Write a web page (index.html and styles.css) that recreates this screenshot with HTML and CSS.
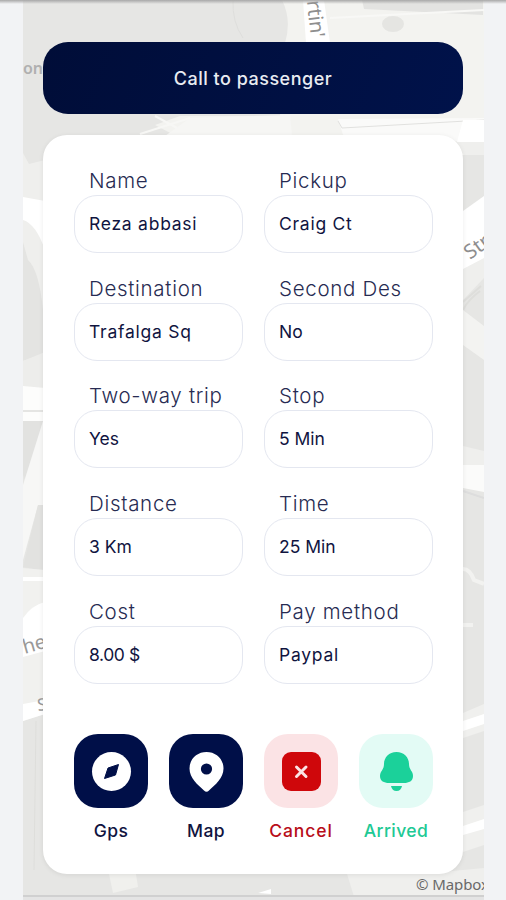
FILE: index.html
```html
<!DOCTYPE html>
<html lang="en">
<head>
<meta charset="utf-8">
<title>Trip details</title>
<link rel="stylesheet" href="styles.css">
</head>
<body>
<svg class="map" viewBox="23 0 461 900" aria-hidden="true">
  <rect x="23" width="461" height="900" fill="#e6e6e4"/>
  <path d="M287 0H484V155H454L420 138H180L155 125L180 116H280L285 43Q292 20 282 0Z" fill="#f3f3f0"/>
  <path d="M233 0Q232 22 243 38" fill="none" stroke="#dededc"/>
  <path d="M303 0H324L330 43H306Z" fill="#fff"/>
  <path d="M362 0H483V15L364 9Z" fill="#e3e3e1"/>
  <ellipse cx="393" cy="24" rx="11" ry="8" fill="#e5e5e2"/>
  <path d="M330 18L484 10" stroke="#f8f8f6" stroke-width="2"/>
  <path d="M190 118L290 115L292 136H165Z" fill="#f6f6f4"/>
  <path d="M338 119L484 118V141H345Z" fill="#fafaf9"/><path d="M338 121L342 128L484 120" fill="none" stroke="#e1e1df"/>
  <path d="M140 134L190 118M155 116L177 128" stroke="#f7f7f5" stroke-width="2"/>
  <path d="M23 153L29 164L45 160V363L23 361Z" fill="#efefed"/>
  <path d="M23 197L45 201V250Q36 224 23 220Z" fill="#fff"/>
  <path d="M23 242L28 260Q39 270 43 310V354L23 361Z" fill="#e4e4e2"/>
  <path d="M23 361L45 352V388H23Z" fill="#ededeb"/>
  <path d="M23 386L45 388V421H23Z" fill="#fdfdfc"/><path d="M23 411H45" stroke="#e5e5e3" stroke-width="2"/>
  <path d="M23 421H43L28 485L23 475Z" fill="#e2e2e0"/>
  <path d="M43 421V505H38L23 560V485Z" fill="#f7f7f6"/>
  <path d="M38 505H45V571L23 567Z" fill="#e2e2e0"/>
  <path d="M23 568L45 570V714L23 721Z" fill="#f1f1ef"/><path d="M23 579H45" stroke="#fff" stroke-width="4"/>
  <path d="M23 618Q32 605 45 602V651L23 657Z" fill="#fff"/>
  <path d="M23 704L45 700V714L23 721Z" fill="#fff"/>
  <path d="M36 721L34 870" stroke="#dededb"/>
  <path d="M463 120H484V142H457Z" fill="#fff"/>
  <path d="M455 142H484V155H464Z" fill="#efefed"/>
  <path d="M463 211L484 196V264L463 271Z" fill="#fff"/>
  <path d="M463 269L484 258V278L463 300Z" fill="#efefed"/>
  <path d="M463 302L481 286M463 310Q468 300 480 291" fill="none" stroke="#dededb" stroke-width="2"/>
  <path d="M463 310L484 326V360L463 345Z" fill="#f3f3f1"/>
  <path d="M463 446L484 451V466H463Z" fill="#efefed"/><path d="M463 465H484V492L463 488Z" fill="#fbfbfa"/>
  <path d="M463 491L484 498" stroke="#ddd" stroke-width="2"/>
  <path d="M463 569Q470 569 474 580L484 584M463 625H473" fill="none" stroke="#f2f2f0" stroke-width="4"/>
  <path d="M463 713L484 704V731L463 738Z" fill="#f0f0ee"/><path d="M463 721L484 714V724L463 731Z" fill="#fff"/>
  <path d="M463 812L484 805V845L463 852Z" fill="#f0f0ee"/><path d="M463 826L484 819V829L463 835Z" fill="#fff"/>
  <path d="M109 874H136L138 887L113 893Z" fill="#f0f0ed"/>
  <path d="M347 874H420L484 868V900H355Z" fill="#efefed"/><path d="M258 893L271 889V894Z" fill="#fff"/>
  <path d="M23 896H484" stroke="#d0d0d0" stroke-width="2"/>
  <rect x="23" y="897" width="461" height="3" fill="#e4e4e4"/>
  <g class="street">
    <text x="23" y="74" font-size="16" font-weight="600" fill="#b0b0b0">on.</text>
    <text transform="translate(307 1) rotate(84)" font-size="20" fill="#8e8e8e">rtin'</text>
    <text transform="translate(470 260) rotate(-36)" font-size="20" fill="#8e8e8e">Str</text>
    <text transform="translate(14 657) rotate(-16)" font-size="20" fill="#999">The</text>
    <text transform="translate(38 711) rotate(-7)" font-size="17" fill="#999">S</text>
    <text x="416" y="890" font-size="15" fill="#696969" textLength="73">© Mapbox</text>
  </g>
</svg>
<div class="top-edge"></div>
<main class="screen">
  <button class="call">Call to passenger</button>
  <section class="card">
    <div class="fields">
      <div class="field"><label>Name</label><div class="value name">Reza abbasi</div></div>
      <div class="field"><label>Pickup</label><div class="value name">Craig Ct</div></div>
      <div class="field"><label>Destination</label><div class="value name">Trafalga Sq</div></div>
      <div class="field"><label>Second Des</label><div class="value">No</div></div>
      <div class="field"><label>Two-way trip</label><div class="value">Yes</div></div>
      <div class="field"><label>Stop</label><div class="value">5 Min</div></div>
      <div class="field"><label>Distance</label><div class="value">3 Km</div></div>
      <div class="field"><label>Time</label><div class="value">25 Min</div></div>
      <div class="field"><label>Cost</label><div class="value price">8.00 $</div></div>
      <div class="field"><label>Pay method</label><div class="value name">Paypal</div></div>
    </div>
    <nav class="actions">
      <div class="action"><div class="tile"><svg viewBox="0 0 74 74"><circle cx="37.5" cy="37.5" r="19.5" fill="#fff"/><path d="M44.5 30.500L41.500 41L30.500 44.500L34 34Z" fill="#000f48" stroke="#000f48" stroke-linejoin="round"/></svg></div><span>Gps</span></div>
      <div class="action"><div class="tile"><svg viewBox="0 0 74 74"><path d="M35 56.500C29 51 20.500 44 20.500 34.500C20.500 25 28 18 37.500 18S54.500 25 54.500 34.500C54.500 44 46 51 40 56.500Q37.500 59 35 56.500Z" fill="#fff"/><circle cx="37.500" cy="35" r="5.600" fill="#000f48"/></svg></div><span>Map</span></div>
      <div class="action cancel"><div class="tile"><svg viewBox="0 0 74 74"><rect x="18" y="18" width="39" height="39" rx="9" fill="#cf070b"/><path d="M32.500 33L42 42.500M42 33L32.500 42.500" stroke="#fbe3e5" stroke-width="3" stroke-linecap="round"/></svg></div><span>Cancel</span></div>
      <div class="action arrived"><div class="tile"><svg viewBox="0 0 74 74"><path d="M37.500 18C30 18 25 23.500 25 30C25 36 21 37 21 42C21 47 25 49 30 49H45C50 49 54 47 54 42C54 37 50 36 50 30C50 23.500 45 18 37.500 18Z" fill="#1bd19a"/><path d="M32 52H43Q42 57 37.500 57T32 52Z" fill="#1bd19a"/></svg></div><span>Arrived</span></div>
    </nav>
  </section>
</main>
</body>
</html>
```
FILE: styles.css
```css
* { box-sizing: border-box; }
body {
  margin: 0;
  height: 900px;
  overflow: hidden;
  position: relative;
  background: #f2f3f5;
  font-family: Inter, "Open Sans", sans-serif;
  color: #10143f;
}
.map { position: absolute; left: 23px; top: 0; width: 461px; height: 900px; }
.street { font-family: "Noto Sans", sans-serif; }
.top-edge {
  position: absolute;
  inset: 0 0 auto;
  height: 4px;
  background: linear-gradient(#a8a8a8, rgba(190, 190, 190, 0));
}
.screen {
  position: relative;
  width: 420px;
  margin-left: 43px;
  padding-top: 42px;
  display: flex;
  flex-direction: column;
  gap: 21px;
}
.call {
  height: 72px;
  border: 0;
  border-radius: 25px;
  background: linear-gradient(110deg, #000d38, #00124a);
  color: #e9ecf2;
  font: 500 18px Inter, sans-serif;
  letter-spacing: .5px;
  padding: 0;
}
.card {
  height: 739px;
  padding: 29px 30px 0 31px;
  border-radius: 24px;
  background: #fff;
  box-shadow: 0 1px 5px rgba(0, 0, 0, .08);
}
.fields {
  display: grid;
  grid-template-columns: 169px 169px;
  column-gap: 21px;
  row-gap: 19px;
}
.field { height: 88.7px; }
.field label {
  display: block;
  height: 31px;
  padding-left: 15px;
  font-size: 20.5px;
  font-weight: 300;
  line-height: 33px;
  letter-spacing: .7px;
  white-space: nowrap;
  color: #272b52;
}
.value {
  height: 58px;
  padding-left: 14px;
  border: 1px solid #e4e7f0;
  border-radius: 23px;
  font-size: 17.5px;
  line-height: 56px;
}
.name { letter-spacing: .75px; }
.price { letter-spacing: -.4px; }
.actions {
  display: grid;
  grid-template-columns: repeat(4, 74px);
  column-gap: 21px;
  margin-top: 51px;
}
.action { display: flex; flex-direction: column; align-items: center; }
.tile { width: 74px; height: 74px; border-radius: 24px; background: #000f48; }
.tile svg { display: block; width: 74px; height: 74px; }
.action span {
  margin-top: 11px;
  font-size: 17.5px;
  line-height: 24px;
  font-weight: 500;
  letter-spacing: .4px;
}
.cancel .tile { background: #fbe3e5; }
.cancel span { color: #b80d1a; letter-spacing: .9px; }
.arrived .tile { background: #e3fbf5; }
.arrived span { color: #20c994; }
```
